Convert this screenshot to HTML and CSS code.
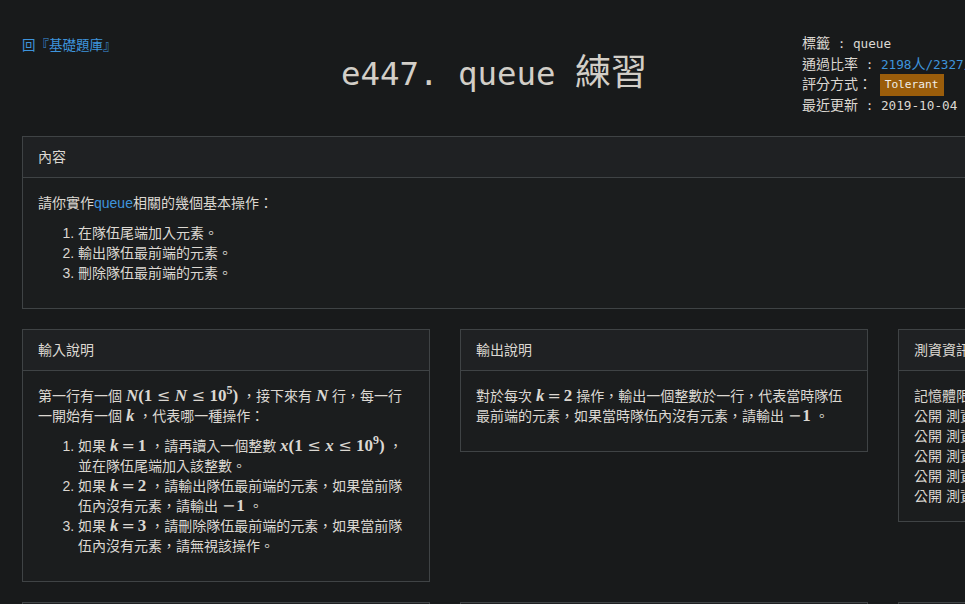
FILE: index.html
```html
<!DOCTYPE html>
<html lang="zh-Hant">
<head>
<meta charset="utf-8">
<title>e447. queue 練習</title>
<link rel="stylesheet" href="styles.css">
</head>
<body>
<div class="page">
  <header class="top">
    <div class="back"><a href="#">回『基礎題庫』</a></div>
    <h1 class="title"><span class="lat">e447. queue </span>練習</h1>
    <div class="info">
      <div class="irow">標籤<span class="lat"> : queue</span></div>
      <div class="irow">通過比率<span class="lat"> : <a href="#">2198</a></span><a href="#">人</a><span class="lat"><a href="#">/2327</a></span><a href="#">人</a><span class="lat"><a href="#">(94%)</a></span></div>
      <div class="irow">評分方式：<span class="lat"> </span><span class="badge">Tolerant</span></div>
      <div class="irow">最近更新<span class="lat"> : 2019-10-04 22:31</span></div>
    </div>
  </header>

  <section class="panel">
    <div class="phead">內容</div>
    <div class="pbody">
      <p>請你實作<span class="hl">queue</span>相關的幾個基本操作：</p>
      <ol>
        <li>在隊伍尾端加入元素。</li>
        <li>輸出隊伍最前端的元素。</li>
        <li>刪除隊伍最前端的元素。</li>
      </ol>
    </div>
  </section>

  <div class="cols">
    <section class="panel">
      <div class="phead">輸入說明</div>
      <div class="pbody">
        <p>第一行有一個 <span class="m"><i>N</i>(1<span class="rel">≤</span><i>N</i><span class="rel">≤</span>10<sup>5</sup>)</span> ，接下來有 <span class="m"><i>N</i></span> 行，每一行一開始有一個 <span class="m"><i>k</i></span> ，代表哪一種操作：</p>
        <ol>
          <li>如果 <span class="m"><i>k</i><span class="rel eq">=</span>1</span> ，請再讀入一個整數 <span class="m"><i>x</i>(1<span class="rel">≤</span><i>x</i><span class="rel">≤</span>10<sup>9</sup>)</span> ，並在隊伍尾端加入該整數。</li>
          <li>如果 <span class="m"><i>k</i><span class="rel eq">=</span>2</span> ，請輸出隊伍最前端的元素，如果當前隊伍內沒有元素，請輸出 <span class="m"><span class="neg">−</span>1</span> 。</li>
          <li>如果 <span class="m"><i>k</i><span class="rel eq">=</span>3</span> ，請刪除隊伍最前端的元素，如果當前隊伍內沒有元素，請無視該操作。</li>
        </ol>
      </div>
    </section>
    <section class="panel">
      <div class="phead">輸出說明</div>
      <div class="pbody">
        <p>對於每次 <span class="m"><i>k</i><span class="rel eq">=</span>2</span> 操作，輸出一個整數於一行，代表當時隊伍最前端的元素，如果當時隊伍內沒有元素，請輸出 <span class="m"><span class="neg">−</span>1</span> 。</p>
      </div>
    </section>
    <section class="panel">
      <div class="phead">測資資訊</div>
      <div class="pbody">
        <div class="line">記憶體限制： 64 MB</div>
        <div class="line">公開 測資點#0 (20%): 1.0s , &lt;1K</div>
        <div class="line">公開 測資點#1 (20%): 1.0s , &lt;1K</div>
        <div class="line">公開 測資點#2 (20%): 1.0s , &lt;1M</div>
        <div class="line">公開 測資點#3 (20%): 1.0s , &lt;1M</div>
        <div class="line">公開 測資點#4 (20%): 1.0s , &lt;1M</div>
      </div>
    </section>
  </div>

  <div class="cols">
    <section class="panel">
      <div class="phead">範例輸入 #1</div>
      <div class="pbody"><pre>5
1 1
1 2
2
3
2</pre></div>
    </section>
    <section class="panel">
      <div class="phead">範例輸出 #1</div>
      <div class="pbody"><pre>1
2</pre></div>
    </section>
    <section class="panel">
      <div class="phead">提示</div>
      <div class="pbody"><p>無</p></div>
    </section>
  </div>
</div>
</body>
</html>
```

FILE: styles.css
```css
html, body {
  margin: 0;
  padding: 0;
  height: 100%;
  overflow: hidden;
  background: #181a1b;
}

body {
  color: #dcd8d2;
  font-family: "Liberation Sans", "Noto Sans CJK TC", sans-serif;
  font-size: 14px;
  line-height: 20px;
}

a {
  color: #3e94dc;
  text-decoration: none;
}

.page {
  width: 1284px;
  padding: 33px 0 0 22px;
}

/* header */
.top {
  display: flex;
  align-items: flex-start;
  height: 103px;
}

.back {
  width: 319px;
  margin-top: 1px;
  font-size: 13.5px;
  line-height: 20px;
  font-family: "Noto Sans CJK TC", sans-serif;
}

.title {
  width: 461px;
  margin: 20px 0 0;
  font-family: "DejaVu Sans Mono", "Noto Sans CJK TC", monospace;
  font-size: 36px;
  line-height: 40px;
  font-weight: normal;
  color: #d2cec7;
  white-space: nowrap;
}

.title .lat {
  font-size: 32.4px;
}

.info {
  font-family: "DejaVu Sans Mono", "Noto Sans CJK TC", monospace;
  font-size: 14px;
  color: #dcd8d2;
  white-space: nowrap;
}

.irow {
  height: 20.7px;
  line-height: 20.7px;
}

.info .lat {
  font-size: 12.7px;
}

.badge {
  display: inline-block;
  height: 22px;
  line-height: 22px;
  padding: 0 5px;
  background: #9a5d0b;
  color: #f1eee9;
  font-family: "DejaVu Sans Mono", monospace;
  font-size: 11.2px;
  vertical-align: middle;
}

/* panels */
.panel {
  border: 1px solid #3f4345;
  background: #1b1d1e;
  margin-bottom: 20px;
}

.phead {
  padding: 10px 15px;
  background: #1f2123;
  border-bottom: 1px solid #3f4345;
}

.pbody {
  padding: 15px;
}

.pbody p {
  margin: 0 0 10px;
}

.pbody ol {
  margin: 0 0 10px;
  padding-left: 40px;
}

.pbody pre {
  margin: 0;
  font-family: "DejaVu Sans Mono", monospace;
  font-size: 13px;
}

.hl {
  color: #3e94dc;
}

.cols {
  display: grid;
  grid-template-columns: repeat(3, 408px);
  column-gap: 30px;
  align-items: start;
}

.line {
  white-space: nowrap;
}

/* math */
.m {
  font-family: "Liberation Serif", "DejaVu Serif", serif;
  font-size: 17px;
  font-weight: bold;
  line-height: 1;
  white-space: nowrap;
}

.m i {
  font-style: italic;
}

.m .rel {
  font-family: "DejaVu Serif", serif;
  font-weight: normal;
  font-size: 16px;
  margin: 0 4.5px;
}

.m .rel.eq {
  margin: 0 3px;
}

.m .neg {
  font-family: "DejaVu Serif", serif;
  font-weight: normal;
  font-size: 16px;
  margin-right: 1px;
}

.m sup {
  font-size: 12px;
  line-height: 0;
  vertical-align: 7px;
}
```
